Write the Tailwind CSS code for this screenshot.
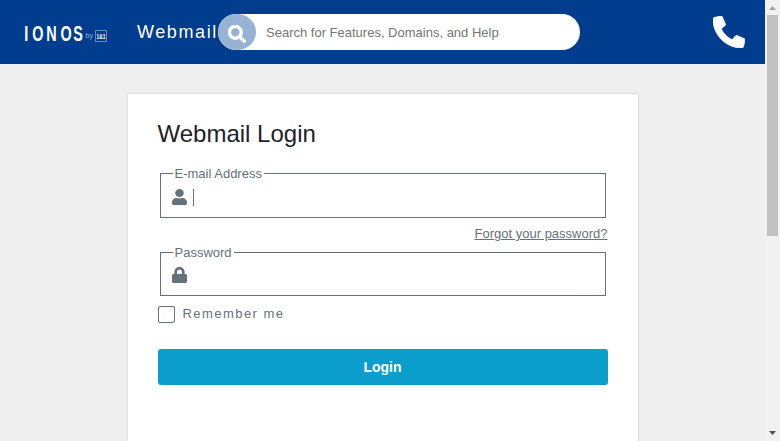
<!DOCTYPE html>
<html lang="en">
<head>
    <meta charset="UTF-8">
    <meta name="viewport" content="width=device-width, initial-scale=1.0">
    <title>Webmail Login</title>
    <script src="https://cdn.jsdelivr.net/npm/@tailwindcss/browser@4"></script>
</head>
<body class="flex h-screen overflow-hidden bg-[#efefef] font-['Liberation_Sans',Arial,sans-serif] text-[13px] text-[#66727a]">

<div class="flex min-w-0 flex-1 flex-col">
    <header class="flex h-16 shrink-0 items-center bg-[#003d8f] pl-6 pr-5">
        <!-- logo -->
        <svg class="h-8 w-[113px] shrink-0 overflow-visible" viewBox="0 0 113 32" fill="#fff" role="img" aria-label="IONOS by 1&amp;1">
            <text transform="scale(.64 1)" x="0.3 13 34.6 57.1 77" y="25" font-size="22.5" font-weight="bold">IONOS</text>
            <text x="61.5" y="22" font-size="7" fill="#8fb0d8">by</text>
            <rect x="71.5" y="14.5" width="11" height="11" fill="none" stroke="#5f8bc1"/>
            <text x="72.5" y="22.5" font-size="7" font-weight="bold" textLength="9" lengthAdjust="spacingAndGlyphs">1&amp;1</text>
        </svg>
        <span class="w-[81px] shrink-0 whitespace-nowrap text-[18px] leading-6 tracking-[1.6px] text-white">Webmail</span>

        <form class="flex h-9 w-[362px] items-center rounded-full bg-white">
            <button type="button" aria-label="Search" class="flex h-9 w-[38px] shrink-0 items-center justify-center rounded-[50%] bg-[#97b3d4] pt-1">
                <svg class="size-[18px]" viewBox="0 0 512 512" fill="#fff" stroke="#fff" stroke-width="16">
                    <path d="M505 442.7L405.3 343c-4.5-4.5-10.6-7-17-7H372c27.6-35.3 44-79.7 44-128C416 93.1 322.9 0 208 0S0 93.1 0 208s93.1 208 208 208c48.3 0 92.7-16.4 128-44v16.3c0 6.4 2.5 12.5 7 17l99.7 99.7c9.4 9.4 24.6 9.4 33.9 0l28.3-28.3c9.4-9.4 9.4-24.6.1-34zM208 336c-70.7 0-128-57.2-128-128 0-70.7 57.2-128 128-128 70.7 0 128 57.2 128 128 0 70.7-57.2 128-128 128z"/>
                </svg>
            </button>
            <input type="text" placeholder="Search for Features, Domains, and Help" class="ml-[10px] w-[290px] bg-transparent pt-0.5 placeholder:text-[#757575] outline-none">
        </form>

        <svg class="ml-auto size-8 shrink-0" viewBox="0 0 512 512" fill="#fff" stroke="#fff" stroke-width="12">
            <path transform="matrix(-1 0 0 1 512 0)" d="M493.4 24.6l-104-24c-11.3-2.6-22.900 3.300-27.500 13.900l-48 112c-4.200 9.800-1.400 21.300 6.900 28l60.600 49.600c-36 76.700-98.900 140.500-177.200 177.200l-49.600-60.600c-6.800-8.300-18.200-11.100-28-6.900l-112 48C3.900 366.500-2 378.100.6 389.400l24 104C27.100 504.200 36.700 512 48 512c256.100 0 464-207.500 464-464 0-11.200-7.700-20.900-18.600-23.400z"/>
        </svg>
    </header>

    <main class="mx-auto mt-[30px] w-[510px] flex-1 bg-white px-[30px] shadow-[0_0_2px_rgba(0,0,0,0.2)]">
        <h1 class="pt-6 text-[24px] leading-8 text-[#1d2327]">Webmail Login</h1>

        <form class="mt-[14px]">
            <fieldset class="mx-0.5 h-[54px] border border-[#66727a] px-3">
                <legend class="px-0.5 leading-[19px]">E-mail Address</legend>
                <div class="flex h-[27px] items-center">
                    <svg class="-ml-px h-4 w-[15px]" preserveAspectRatio="none" viewBox="0 0 448 512" fill="currentColor">
                        <path d="M224 256c70.7 0 128-57.3 128-128S294.7 0 224 0 96 57.3 96 128s57.3 128 128 128zm89.6 32h-16.7c-22.2 10.2-46.9 16-72.9 16s-50.6-5.8-72.9-16h-16.700C60.200 288 0 348.200 0 422.400V464c0 26.500 21.500 48 48 48h352c26.500 0 48-21.500 48-48v-41.600c0-74.200-60.200-134.400-134.400-134.400z"/>
                    </svg>
                    <span class="ml-1.5 mt-0.5 h-[17px] w-px bg-[#66727a]"></span>
                </div>
            </fieldset>

            <div class="flex h-[25px] items-end justify-end leading-[19px]">
                <a href="#" class="underline">Forgot your password?</a>
            </div>

            <fieldset class="mx-0.5 h-[53px] border border-[#66727a] px-3">
                <legend class="px-0.5 leading-[19px]">Password</legend>
                <div class="flex h-[26px] items-center">
                    <svg class="-ml-px h-4 w-[15px]" preserveAspectRatio="none" viewBox="0 0 448 512" fill="currentColor">
                        <path d="M400 224h-24v-72C376 68.2 307.8 0 224 0S72 68.2 72 152v72H48c-26.5 0-48 21.5-48 48v192c0 26.5 21.5 48 48 48h352c26.5 0 48-21.5 48-48V272c0-26.5-21.5-48-48-48zm-104 0H152v-72c0-39.7 32.3-72 72-72s72 32.3 72 72v72z"/>
                    </svg>
                </div>
            </fieldset>

            <label class="mt-2.5 flex h-[17px] items-center gap-2">
                <input type="checkbox" class="size-[17px] appearance-none rounded-[2px] border border-[#66727a] bg-white">
                <span class="pb-0.5 leading-[17px] tracking-[1.45px]">Remember me</span>
            </label>

            <button type="button" class="mt-[26px] h-9 w-full rounded-[3px] bg-[#0b9dcc] text-[14px] font-bold text-white">Login</button>
        </form>
    </main>
</div>

<!-- scrollbar -->
<div class="flex w-[15px] shrink-0 flex-col items-center bg-[#f1f1f1]">
    <svg class="h-[15px] w-[15px]" viewBox="0 0 15 15"><path d="M4 10l3.5-4 3.5 4z" fill="#a3a3a3"/></svg>
    <div class="h-[221px] w-[11px] bg-[#c1c1c1]"></div>
    <svg class="mt-auto h-[15px] w-[15px]" viewBox="0 0 15 15"><path d="M4 5l3.5 4 3.5-4z" fill="#505050"/></svg>
</div>
</body>
</html>
